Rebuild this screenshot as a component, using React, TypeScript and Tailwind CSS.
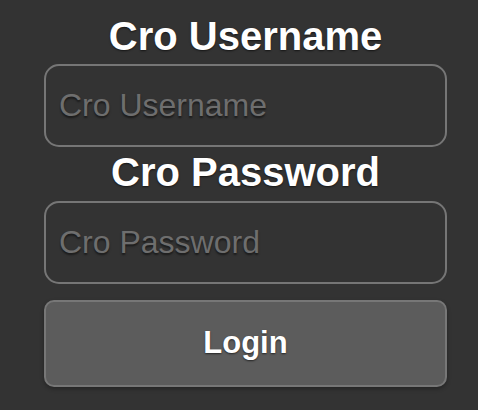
import React from 'react'

export default function App() {
  return (
    <div className="min-h-[410px] w-full bg-[#333333] pt-[16px] font-['Liberation_Sans',Arial,sans-serif]">
      <div className="ml-[44px] w-[403px] flex flex-col">
        <h1 className="text-center text-[40px] leading-[40px] font-bold text-white [text-shadow:0_1px_2px_rgba(0,0,0,0.6)]">
          Cro Username
        </h1>
        <input
          type="text"
          placeholder="Cro Username"
          className="mt-[8px] h-[83px] w-full rounded-[15px] border-2 border-[#767676] bg-[#333333] px-[13px] text-[32px] text-white outline-none placeholder:text-[#6e6e6e] [text-shadow:0_2px_2px_rgba(0,0,0,0.5)]"
        />
        <h1 className="mt-[5px] text-center text-[40px] leading-[40px] font-bold text-white [text-shadow:0_1px_2px_rgba(0,0,0,0.6)]">
          Cro Password
        </h1>
        <input
          type="password"
          placeholder="Cro Password"
          className="mt-[9px] h-[83px] w-full rounded-[15px] border-2 border-[#767676] bg-[#333333] px-[13px] text-[32px] text-white outline-none placeholder:text-[#6e6e6e] [text-shadow:0_2px_2px_rgba(0,0,0,0.5)]"
        />
        <button
          type="button"
          className="mt-[16px] h-[87px] w-full rounded-[10px] border-2 border-[#777777] bg-[#5c5c5c] text-[31px] font-bold text-white shadow-[0_2px_4px_rgba(0,0,0,0.3)] [text-shadow:0_1px_2px_rgba(0,0,0,0.6)]"
        >
          Login
        </button>
      </div>
    </div>
  )
}
